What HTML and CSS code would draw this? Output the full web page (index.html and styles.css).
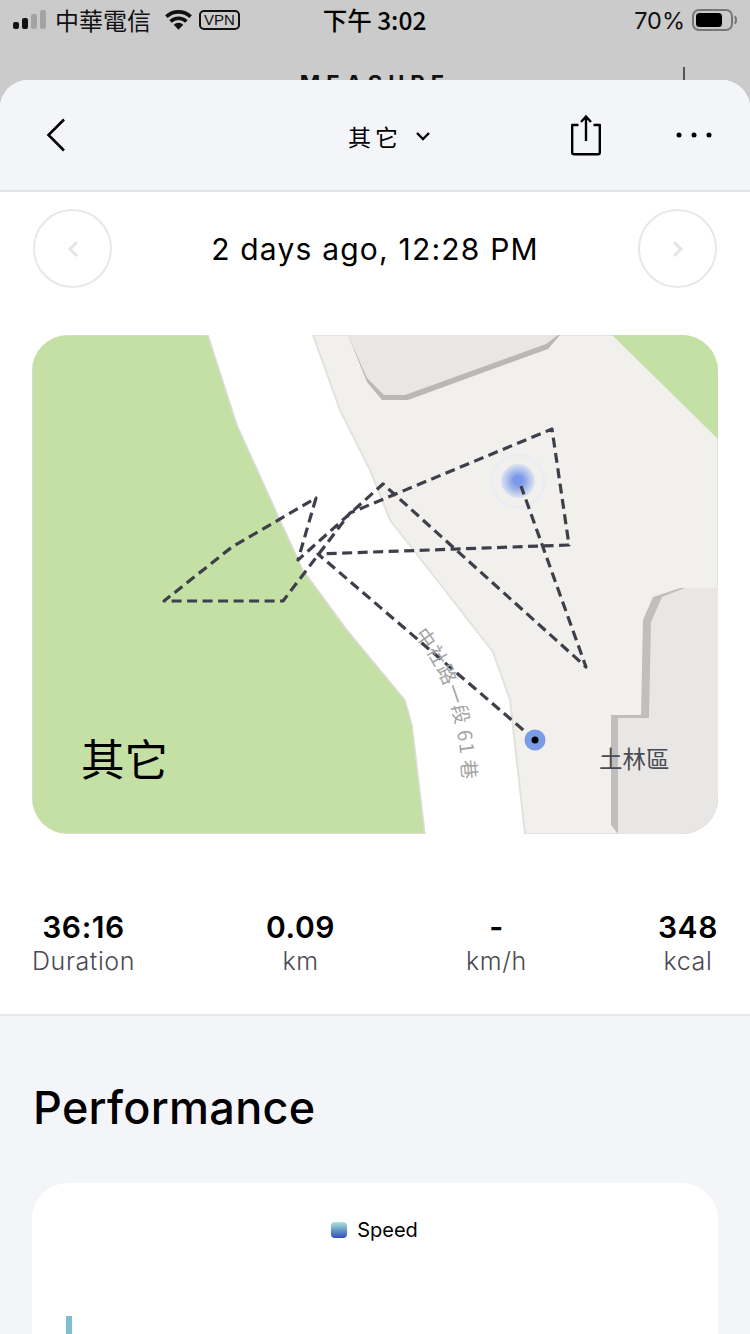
FILE: index.html
```html
<!DOCTYPE html>
<html lang="zh-Hant">
<head>
<meta charset="utf-8">
<title>Measure</title>
<link rel="stylesheet" href="styles.css">
</head>
<body>
<div class="app">
  <header class="behind">
    <div class="status">
      <div class="status-left">
        <svg class="signal" width="33" height="20" viewBox="0 0 33 20"><rect x="0" y="12" width="6" height="7" rx="2" fill="#111"/><rect x="9" y="8" width="6" height="11" rx="2" fill="#111"/><rect x="18" y="4" width="6" height="15" rx="2" fill="#a3a3a3"/><rect x="27" y="0" width="6" height="19" rx="2" fill="#a3a3a3"/></svg>
        <span class="carrier">中華電信</span>
        <svg class="wifi" width="27" height="22" viewBox="0 0 26 20"><path d="M13 19.500l-4.600-5a6.500 6.500 0 0 1 9.200 0z" fill="#111"/><path d="M5.400 11.400a11 11 0 0 1 15.200 0" fill="none" stroke="#111" stroke-width="3.500"/><path d="M1.300 6.800a17 17 0 0 1 23.400 0" fill="none" stroke="#111" stroke-width="3.500"/></svg>
        <span class="vpn">VPN</span>
      </div>
      <div class="clock">下午 3:02</div>
      <div class="status-right">
        <span class="pct">70%</span>
        <svg width="46" height="24" viewBox="0 0 46 24"><rect x="1" y="2" width="39" height="20" rx="6" fill="none" stroke="#777" stroke-width="2"/><rect x="4" y="5" width="26" height="14" rx="3.500" fill="#000"/><path d="M42.500 8.500c2 .8 2 6.200 0 7" fill="none" stroke="#777" stroke-width="2"/></svg>
      </div>
    </div>
    <div class="behind-title">MEASURE</div>
    <div class="behind-plus"></div>
  </header>

  <main class="sheet">
    <nav class="nav">
      <svg class="nav-back" width="20" height="34" viewBox="0 0 20 34"><path d="M18 1.500 2.500 17 18 32.500" fill="none" stroke="#000" stroke-width="2.600"/></svg>
      <div class="nav-title">
        <span>其它</span>
        <svg width="16" height="11" viewBox="0 0 16 11"><path d="M2 2l6 6 6-6" fill="none" stroke="#000" stroke-width="2.400"/></svg>
      </div>
      <div class="nav-actions">
        <svg width="32" height="42" viewBox="0 0 32 42"><path d="M8.500 11H2.200v27.500a1.800 1.800 0 0 0 1.800 1.800h24a1.800 1.800 0 0 0 1.800-1.800V11h-6.300" fill="none" stroke="#000" stroke-width="2.400" stroke-linejoin="round"/><path d="M16 27V2.500M11 8l5-5.500L21 8" fill="none" stroke="#000" stroke-width="2.400"/></svg>
        <svg width="36" height="6" viewBox="0 0 36 6"><circle cx="3" cy="3" r="2.500"/><circle cx="18" cy="3" r="2.500"/><circle cx="33" cy="3" r="2.500"/></svg>
      </div>
    </nav>

    <section class="content">
      <div class="date-row">
        <div class="round"><svg width="12" height="18" viewBox="0 0 12 18"><path d="M10 2 3 9l7 7" fill="none" stroke="#e4e5e9" stroke-width="3"/></svg></div>
        <div class="date">2 days ago, 12:28 PM</div>
        <div class="round"><svg width="12" height="18" viewBox="0 0 12 18"><path d="M2 2l7 7-7 7" fill="none" stroke="#e4e5e9" stroke-width="3"/></svg></div>
      </div>

      <div class="map">
        <svg class="map-svg" width="686" height="499" viewBox="32 335 686 499">
          <defs>
            <radialGradient id="glow"><stop offset="0" stop-color="#6f8fe6"/><stop offset=".45" stop-color="#94ace9"/><stop offset="1" stop-color="#dfe4f1"/></radialGradient>
          </defs>
          <rect x="32" y="335" width="686" height="499" fill="#fff"/>
          <path d="M32 335H208L237 425 280 520 303 570 347 630 405 700 412 725 425 834H32Z" fill="#c4e0a5" stroke="#dcdcdc" stroke-width="1.500"/>
          <path d="M313 335 340 410 370 470 390 520 437 580 493 652 510 700 525 834H718V335Z" fill="#f1f0ec" stroke="#e2e2de" stroke-width="2"/>
          <path d="M612 335 718 439V335Z" fill="#c4e0a5"/>
          <path d="M348 335 367 382 382 400H408L548 349 560 335Z" fill="#b9b8b6"/>
          <path d="M348 335 367 378 384 395H405L546 344 558 335Z" fill="#e8e7e6"/>
          <path d="M685 588H680L653 597 643 620 641 715H611V825L618 834H718V588Z" fill="#c0bfbd"/>
          <path d="M718 588H685L662 597 651 622 649 718H618V834H718Z" fill="#e8e7e6"/>
          <circle cx="518" cy="481" r="26" fill="none" stroke="#e9ecf3" stroke-width="2.500"/>
          <circle cx="518" cy="481" r="17" fill="url(#glow)"/>
          <circle cx="518" cy="480" r="5.500" fill="#7a9bec"/>
          <path class="track" d="M535 740 318 554 569 545 552 429 350 513 283 601H164L232 547 316 498 298 560 383 484 586 667 521 486"/>
          <circle cx="535" cy="740" r="10.500" fill="#7a9be6"/>
          <circle cx="535" cy="740" r="3.500" fill="#000"/>
          <path id="road" d="M414 634Q440 668 451 705T464 810" fill="none"/>
          <text class="road"><textPath href="#road">中社路一段 61 巷</textPath></text>
          <text class="district" x="599" y="768">土林區</text>
          <text class="activity" x="81" y="776">其它</text>
        </svg>
      </div>

      <div class="stats">
        <div class="stat"><b>36:16</b><span>Duration</span></div>
        <div class="stat"><b>0.09</b><span>km</span></div>
        <div class="stat"><b>-</b><span>km/h</span></div>
        <div class="stat"><b>348</b><span>kcal</span></div>
      </div>
    </section>

    <section class="perf">
      <h2>Performance</h2>
      <div class="card">
        <div class="legend"><i class="swatch"></i><span>Speed</span></div>
        <div class="bar"></div>
      </div>
    </section>
  </main>
</div>
</body>
</html>
```
FILE: styles.css
```css
* { box-sizing: border-box; }
html, body { margin: 0; height: 1334px; overflow: hidden; }
body { font-family: Inter, "Noto Sans CJK TC", sans-serif; color: #000; background: #cbcbcb; }
.app { width: 750px; height: 1334px; overflow: hidden; display: flex; flex-direction: column; }

.behind { height: 80px; flex: none; position: relative; overflow: hidden; background: #cbcbcb; }
.status { height: 40px; display: grid; grid-template-columns: 1fr auto 1fr; align-items: center; padding: 0 12px 0 13px; }
.status-left { display: flex; align-items: center; }
.carrier { font: 400 24px "Noto Sans CJK TC", sans-serif; margin-left: 9px; line-height: 30px; color: #111; }
.wifi { margin-left: 14px; }
.vpn { margin-left: 7px; width: 41px; height: 20px; border: 2px solid #111; border-radius: 5px; font: 400 15px/16px "Liberation Sans Narrow", "Liberation Sans", sans-serif; text-align: center; color: #111; }
.clock { font: 500 24.500px "Noto Sans CJK TC", sans-serif; line-height: 30px; margin-left: -2px; }
.status-right { display: flex; justify-content: flex-end; align-items: center; gap: 7px; }
.pct { font: 400 23.500px Inter, sans-serif; color: #111; }
.behind-title { position: absolute; left: 0; right: 0; top: 70px; text-align: center; font-weight: 700; font-size: 22px; letter-spacing: 6px; line-height: 26px; color: #111; }
.behind-plus { position: absolute; left: 683px; top: 67px; width: 2px; height: 14px; background: #555; }

.sheet { flex: 1; min-height: 0; border-radius: 28px 28px 0 0; background: #fff; overflow: hidden; }
.nav { height: 112px; background: #f4f5f9; border-bottom: 2px solid #e4e5e9; padding: 0 38px 0 46px; display: flex; align-items: center; position: relative; }
.nav-back { flex: none; }
.nav-title { position: absolute; left: 348px; top: 42px; display: flex; align-items: center; gap: 13px; font: 400 23px/28px "Noto Sans CJK TC", sans-serif; letter-spacing: 4px; }
.nav-actions { margin-left: auto; display: flex; align-items: center; gap: 74px; }

.content { padding: 17px 32px 0; height: 824px; border-bottom: 2px solid #e6e7eb; }
.date-row { display: flex; align-items: center; justify-content: space-between; padding: 0 1px; }
.round { width: 79px; height: 79px; border-radius: 50%; border: 2px solid #e8e8ec; display: flex; align-items: center; justify-content: center; }
.date { font-size: 30px; line-height: 40px; font-weight: 400; letter-spacing: 1.200px; }
.map { margin-top: 47px; height: 499px; border-radius: 36px; overflow: hidden; }
.map-svg { display: block; }
.track { fill: none; stroke: #3e3f4a; stroke-width: 3.200; stroke-dasharray: 10 5.500; stroke-linejoin: round; }
.road { font: 400 19.500px "Noto Sans CJK TC", sans-serif; letter-spacing: 1px; fill: #a3a3a3; }
.district { font: 400 23.500px "Noto Sans CJK TC", sans-serif; fill: #4b4b52; }
.activity { font: 400 43.500px "Noto Sans CJK TC", sans-serif; fill: #000; }

.stats { margin-top: 77px; display: flex; justify-content: space-between; }
.stat { display: flex; flex-direction: column; align-items: center; }
.stat b { font-weight: 600; font-size: 30px; letter-spacing: .6px; line-height: 34px; margin-top: -1px; }
.stat span { font-size: 25px; letter-spacing: .6px; line-height: 34px; color: #4a4a52; font-weight: 300; }

.perf { background: #f4f5f9; padding: 60px 32px 0; height: 400px; }
.perf h2 { margin: 0 0 0 1px; font-size: 45px; letter-spacing: .3px; line-height: 64px; font-weight: 500; }
.card { margin-top: 43px; height: 320px; background: #fff; border-radius: 36px; padding-top: 34px; position: relative; }
.legend { display: flex; align-items: center; justify-content: center; gap: 10px; font-size: 20px; line-height: 26px; padding-right: 1px; }
.swatch { width: 16px; height: 16px; border-radius: 4px; background: linear-gradient(#a8e6d8, #2f4db8); }
.bar { position: absolute; left: 34px; top: 133px; width: 6px; height: 100px; background: #7fbdd1; }
```
